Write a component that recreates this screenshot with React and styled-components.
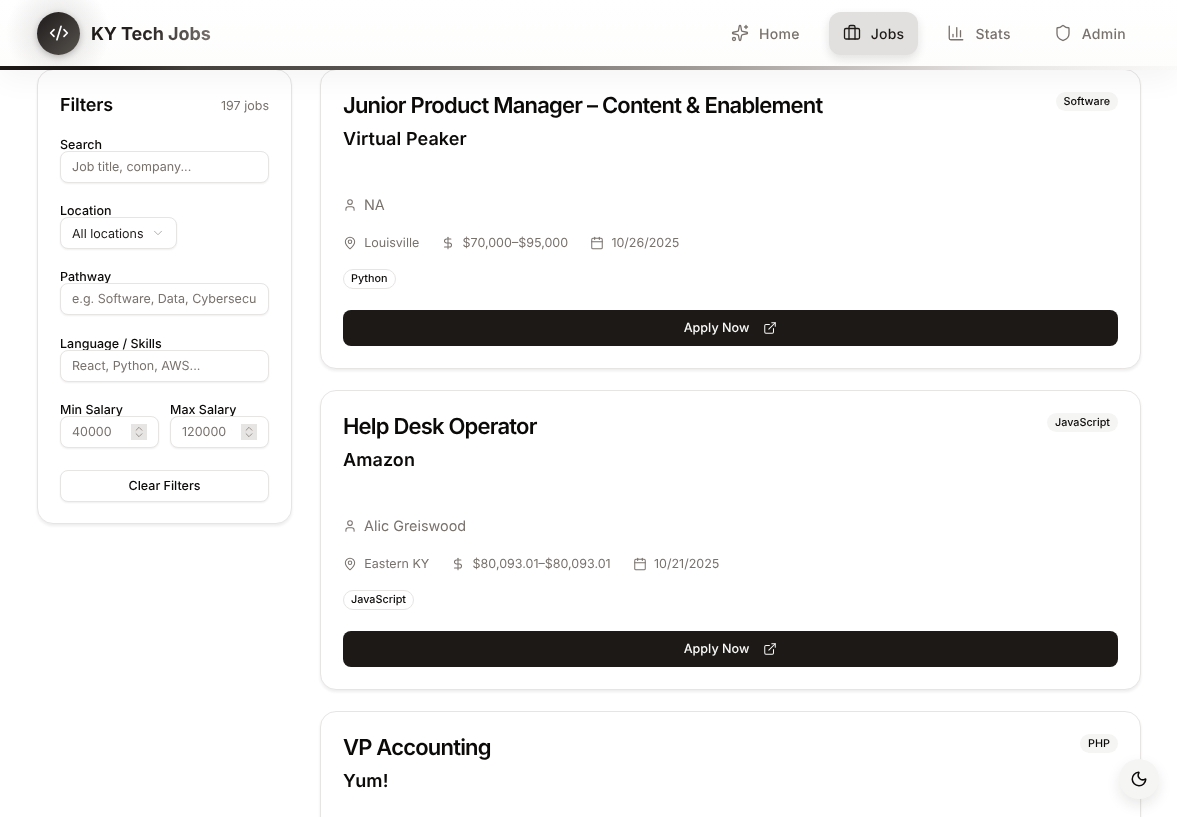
import React from "react";
import styled, { createGlobalStyle } from "styled-components";
import {
  Sparkles, Briefcase, ChartColumn, Shield, CodeXml, User, MapPin, DollarSign, Calendar,
  ExternalLink, Moon, ChevronDown, ChevronsUpDown,
} from "lucide-react";

const Global = createGlobalStyle`
  html, body { margin: 0; height: 100%; overflow: hidden; background: #fff; }
  body { font-family: Inter, "Liberation Sans", sans-serif; color: #1c1917; text-rendering: geometricPrecision; }
  * { box-sizing: border-box; }
  input::placeholder { color: #78716c; opacity: 1; }
`;

const Page = styled.div`
  height: 817px;
  overflow: hidden;
  position: relative;
  will-change: transform;
`;
const Header = styled.header`
  position: relative;
  z-index: 2;
  height: 70px;
  padding: 0 37px 4px;
  display: flex;
  align-items: center;
  justify-content: space-between;
  background: linear-gradient(180deg, #fff, #fdfdfc);
  box-shadow: 0 10px 30px rgba(28,25,23,.045);
  &::before {
    content: "";
    position: absolute;
    left: 0;
    top: 0;
    width: 110px;
    height: 66px;
    background: radial-gradient(circle at 58px 33px, rgba(120,113,108,.22), rgba(120,113,108,0) 52px);
    pointer-events: none;
  }
  &::after {
    content: "";
    position: absolute;
    left: 0;
    right: 0;
    bottom: 0;
    height: 4px;
    background: linear-gradient(90deg, #1c1917 0%, #1c1917 8%, #44403c 16%, #57534e 30%, #a8a29e 62%, #e7e5e4 85%, rgba(231,229,228,.15) 100%);
  }
`;
const Brand = styled.div`
  position: relative;
  display: flex;
  align-items: center;
  gap: 11px;
`;
const LogoMark = styled.div`
  width: 43px;
  height: 43px;
  border-radius: 50%;
  background: linear-gradient(135deg, #292524 20%, #57534e);
  color: #fff;
  display: flex;
  align-items: center;
  justify-content: center;
  box-shadow: 0 2px 6px rgba(28,25,23,.25);
`;
const BrandName = styled.span`
  padding-top: 2px;
  font-size: 18px;
  font-weight: 700;
  letter-spacing: -0.005em;
  background: linear-gradient(90deg, #1c1917 0%, #292524 45%, #78716c 100%);
  -webkit-background-clip: text;
  background-clip: text;
  color: transparent;
`;
const Nav = styled.nav`
  display: flex;
  align-items: center;
  gap: 15px;
`;
const NavItem = styled.a`
  height: 43px;
  padding: 0 14px;
  display: flex;
  align-items: center;
  gap: 10px;
  border-radius: 12px;
  font-size: 14px;
  font-weight: 500;
  letter-spacing: 0.27px;
  color: ${(p) => (p.$active ? "#1c1917" : "#78716c")};
  background: ${(p) => (p.$active ? "#e2e0de" : "transparent")};
  box-shadow: ${(p) => (p.$active ? "0 4px 10px rgba(28,25,23,.12)" : "none")};
`;
const NavLabel = styled.span`
  padding-top: 2px;
`;
const Main = styled.main`
  display: flex;
  align-items: flex-start;
  gap: 28px;
  padding: 0 36px 0 37px;
  margin-top: -1px;
`;
const Sidebar = styled.aside`
  flex: 0 0 255px;
  height: 455px;
  padding: 23px 22px 22px;
  border: 1px solid #e7e5e4;
  border-radius: 16px;
  background: #fff;
  box-shadow: 0 2px 3px rgba(28,25,23,.08);
`;
const SideHead = styled.div`
  display: flex;
  align-items: center;
  justify-content: space-between;
  height: 26px;
  margin-bottom: 18px;
`;
const SideTitle = styled.h2`
  margin: 0;
  font-size: 18px;
  line-height: 26px;
  font-weight: 600;
  letter-spacing: -0.01em;
  color: #0c0a09;
`;
const Count = styled.span`
  font-size: 12.5px;
  color: #78716c;
`;
const Field = styled.div`
  margin-bottom: ${(p) => p.$mb ?? 20}px;
  min-width: 0;
`;
const Label = styled.label`
  display: block;
  font-size: 12.5px;
  font-weight: 500;
  line-height: 18px;
  margin-bottom: -4px;
  color: #0c0a09;
`;
const TextInput = styled.input`
  display: block;
  position: relative;
  width: 100%;
  height: 32px;
  padding: 0 11px;
  border: 1px solid #e7e5e4;
  border-radius: 8px;
  background: #fff;
  box-shadow: 0 1px 2px rgba(28,25,23,.07);
  font: 400 12.5px Inter, sans-serif;
  text-rendering: geometricPrecision;
  color: #1c1917;
  outline: none;
`;
const SelectBox = styled.div`
  position: relative;
  width: 117px;
  height: 32px;
  padding: 0 11px;
  display: flex;
  align-items: center;
  justify-content: space-between;
  border: 1px solid #e7e5e4;
  border-radius: 8px;
  background: #fff;
  box-shadow: 0 1px 2px rgba(28,25,23,.07);
  font-size: 12.5px;
  color: #1c1917;
  svg { color: #a8a29e; }
`;
const SelectValue = styled.span`
  padding-top: 2px;
`;
const SalaryRow = styled.div`
  display: grid;
  grid-template-columns: 99px 99px;
  gap: 11px;
  margin-bottom: 22px;
`;
const NumberBox = styled.div`
  position: relative;
  height: 32px;
  padding: 0 11px;
  display: flex;
  align-items: center;
  justify-content: space-between;
  border: 1px solid #e7e5e4;
  border-radius: 8px;
  background: #fff;
  box-shadow: 0 1px 2px rgba(28,25,23,.07);
  font-size: 12.5px;
  color: #78716c;
`;
const Spinner = styled.span`
  width: 16px;
  height: 16px;
  background: #e7e5e4;
  display: flex;
  align-items: center;
  justify-content: center;
  color: #78716c;
`;
const ClearButton = styled.button`
  display: block;
  width: 100%;
  height: 32px;
  border: 1px solid #e7e5e4;
  border-radius: 8px;
  background: #fff;
  box-shadow: 0 1px 2px rgba(28,25,23,.07);
  font: 500 12.5px Inter, sans-serif;
  text-rendering: geometricPrecision;
  color: #0c0a09;
`;
const Jobs = styled.div`
  flex: 1;
  display: flex;
  flex-direction: column;
  gap: 21px;
`;
const Card = styled.article`
  flex: none;
  height: 300px;
  padding: 22px;
  display: flex;
  flex-direction: column;
  border: 1px solid #e7e5e4;
  border-radius: 16px;
  background: #fff;
  box-shadow: 0 2px 3px rgba(28,25,23,.08);
`;
const CardTop = styled.div`
  display: flex;
  justify-content: space-between;
  align-items: flex-start;
`;
const Title = styled.h3`
  margin: 0;
  font-size: 22px;
  line-height: 28px;
  font-weight: 600;
  letter-spacing: -0.8px;
  color: #0c0a09;
`;
const Category = styled.span`
  height: 19px;
  padding: 0 8px;
  border-radius: 10px;
  background: #f5f5f4;
  font-size: 10.8px;
  font-weight: 500;
  line-height: 19px;
  color: #0c0a09;
`;
const Company = styled.div`
  margin-top: 8px;
  font-size: 18px;
  line-height: 24px;
  font-weight: 600;
  letter-spacing: 0.005em;
  color: #0c0a09;
`;
const Person = styled.div`
  margin-top: 43px;
  display: flex;
  align-items: center;
  gap: 7px;
  height: 20px;
  font-size: 14.4px;
  color: #78716c;
`;
const Meta = styled.div`
  margin-top: 18px;
  height: 20px;
  display: flex;
  align-items: center;
  gap: 22px;
  font-size: 12.5px;
  color: #78716c;
`;
const MetaItem = styled.span`
  display: flex;
  align-items: center;
  gap: 7.25px;
`;
const Tag = styled.span`
  align-self: flex-start;
  margin-top: 16px;
  height: 20px;
  padding: 0 7px;
  border: 1px solid #e7e5e4;
  border-radius: 10px;
  font-size: 10.8px;
  font-weight: 500;
  line-height: 18px;
  color: #0c0a09;
`;
const Apply = styled.a`
  margin-top: 21px;
  height: 36px;
  display: flex;
  align-items: center;
  justify-content: center;
  gap: 14px;
  border-radius: 8px;
  background: #1c1917;
  color: #fafaf9;
  font-size: 12.6px;
  font-weight: 500;
`;
const ApplyLabel = styled.span`
  padding-top: 1px;
`;
const ThemeToggle = styled.button`
  position: absolute;
  right: 18px;
  bottom: 18px;
  width: 40px;
  height: 40px;
  border: 0;
  border-radius: 50%;
  background: #f5f5f4;
  color: #0c0a09;
  display: flex;
  align-items: center;
  justify-content: center;
  box-shadow: 0 6px 14px rgba(28,25,23,.1);
`;

const navItems = [
  { label: "Home", Icon: Sparkles },
  { label: "Jobs", Icon: Briefcase, active: true },
  { label: "Stats", Icon: ChartColumn },
  { label: "Admin", Icon: Shield },
];
const jobs = [
  { title: "Junior Product Manager – Content & Enablement", company: "Virtual Peaker", cat: "Software", person: "NA", loc: "Louisville", pay: "$70,000–$95,000", date: "10/26/2025", tag: "Python" },
  { title: "Help Desk Operator", company: "Amazon", cat: "JavaScript", person: "Alic Greiswood", loc: "Eastern KY", pay: "$80,093.01–$80,093.01", date: "10/21/2025", tag: "JavaScript" },
  { title: "VP Accounting", company: "Yum!", cat: "PHP", person: "NA", loc: "Louisville", pay: "$70,000–$95,000", date: "10/20/2025", tag: "PHP" },
];

export default function App() {
  return (
    <Page>
      <Global />
      <Header>
        <Brand>
          <LogoMark><CodeXml size={20} strokeWidth={2} /></LogoMark>
          <BrandName>KY Tech Jobs</BrandName>
        </Brand>
        <Nav>
          {navItems.map(({ label, Icon, active }) => (
            <NavItem key={label} $active={active}>
              <Icon size={18} strokeWidth={1.75} />
              <NavLabel>{label}</NavLabel>
            </NavItem>
          ))}
        </Nav>
      </Header>
      <Main>
        <Sidebar>
          <SideHead>
            <SideTitle>Filters</SideTitle>
            <Count>197 jobs</Count>
          </SideHead>
          <Field><Label>Search</Label><TextInput placeholder="Job title, company..." /></Field>
          <Field><Label>Location</Label><SelectBox><SelectValue>All locations</SelectValue><ChevronDown size={14} strokeWidth={1.5} /></SelectBox></Field>
          <Field $mb={21}><Label>Pathway</Label><TextInput placeholder="e.g. Software, Data, Cybersecurity" /></Field>
          <Field><Label>Language / Skills</Label><TextInput placeholder="React, Python, AWS..." /></Field>
          <SalaryRow>
            <Field $mb={0}><Label>Min Salary</Label><NumberBox>40000<Spinner><ChevronsUpDown size={14} strokeWidth={1.25} /></Spinner></NumberBox></Field>
            <Field $mb={0}><Label>Max Salary</Label><NumberBox>120000<Spinner><ChevronsUpDown size={14} strokeWidth={1.25} /></Spinner></NumberBox></Field>
          </SalaryRow>
          <ClearButton>Clear Filters</ClearButton>
        </Sidebar>
        <Jobs>
          {jobs.map((j) => (
            <Card key={j.title}>
              <CardTop>
                <Title>{j.title}</Title>
                <Category>{j.cat}</Category>
              </CardTop>
              <Company>{j.company}</Company>
              <Person><User size={14} strokeWidth={1.75} />{j.person}</Person>
              <Meta>
                <MetaItem><MapPin size={14} strokeWidth={1.75} />{j.loc}</MetaItem>
                <MetaItem><DollarSign size={14} strokeWidth={1.75} />{j.pay}</MetaItem>
                <MetaItem><Calendar size={14} strokeWidth={1.75} />{j.date}</MetaItem>
              </Meta>
              <Tag>{j.tag}</Tag>
              <Apply><ApplyLabel>Apply Now</ApplyLabel><ExternalLink size={14} strokeWidth={1.75} /></Apply>
            </Card>
          ))}
        </Jobs>
      </Main>
      <ThemeToggle aria-label="Toggle theme"><Moon size={18} strokeWidth={2} /></ThemeToggle>
    </Page>
  );
}
